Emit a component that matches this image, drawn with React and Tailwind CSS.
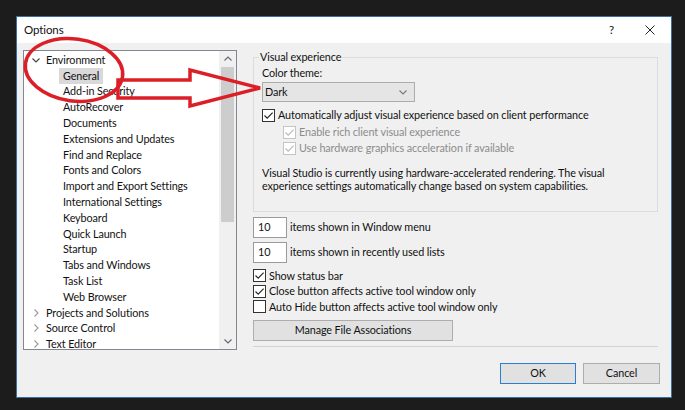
const treeItems = [
  { label: "Environment", level: 0, open: true },
  { label: "General", level: 1, selected: true },
  { label: "Add-in Security", level: 1 },
  { label: "AutoRecover", level: 1 },
  { label: "Documents", level: 1 },
  { label: "Extensions and Updates", level: 1 },
  { label: "Find and Replace", level: 1 },
  { label: "Fonts and Colors", level: 1 },
  { label: "Import and Export Settings", level: 1 },
  { label: "International Settings", level: 1 },
  { label: "Keyboard", level: 1 },
  { label: "Quick Launch", level: 1 },
  { label: "Startup", level: 1 },
  { label: "Tabs and Windows", level: 1 },
  { label: "Task List", level: 1 },
  { label: "Web Browser", level: 1 },
  { label: "Projects and Solutions", level: 0 },
  { label: "Source Control", level: 0 },
  { label: "Text Editor", level: 0 },
];

function Chevron({ dir = "down", color = "#555" }) {
  const d = dir === "down" ? "M1.5 3.5 L5 7 L8.5 3.5" : dir === "up" ? "M1.5 6.5 L5 3 L8.5 6.5" : "M3.5 1.5 L7 5 L3.5 8.5";
  return (
    <svg width="10" height="10" viewBox="0 0 10 10">
      <path d={d} fill="none" stroke={color} strokeWidth="1.1" />
    </svg>
  );
}

function Checkbox({ checked, disabled }) {
  return (
    <span
      className={`flex h-[13px] w-[13px] shrink-0 items-center justify-center border bg-white ${
        disabled ? "border-[#c4c4c4]" : "border-[#333333]"
      }`}
    >
      {checked && (
        <svg width="11" height="11" viewBox="0 0 11 11">
          <path d="M1.5 5.5 L4.2 8.2 L9.6 2.6" fill="none" stroke={disabled ? "#b8b8b8" : "#222"} strokeWidth="1.1" />
        </svg>
      )}
    </span>
  );
}

function CheckRow({ checked, disabled, children, className = "" }) {
  return (
    <div className={`flex items-center gap-[3px] ${className}`}>
      <Checkbox checked={checked} disabled={disabled} />
      <span className={disabled ? "text-[#8c8c8c]" : "text-[#111]"}>{children}</span>
    </div>
  );
}

export default function App() {
  return (
    <div
      className="relative h-[410px] w-[685px] overflow-hidden bg-[#1c1c1c] pl-[16px] pt-[16px] text-[10.8px] tracking-[-0.1px] text-[#111]"
      style={{ fontFamily: "Lato, 'Noto Sans', sans-serif" }}
    >
      <div className="flex h-[382px] w-[656px] flex-col border border-[#3a6ea5] bg-[#f0f0f0]">
        {/* title bar */}
        <div className="flex h-[26px] items-center bg-white pl-[7px]">
          <span className="text-[11.5px]">Options</span>
          <span className="ml-auto text-[11.5px]">?</span>
          <span className="ml-[31px] mr-[16px] flex h-[10px] w-[10px] items-center">
            <svg width="10" height="10" viewBox="0 0 10 10">
              <path d="M0.5 0.5 L9.5 9.5 M9.5 0.5 L0.5 9.5" stroke="#222" strokeWidth="1" />
            </svg>
          </span>
        </div>

        <div className="px-[6px] pt-[7px]">
          <div className="flex">
            {/* tree */}
            <div className="flex h-[300px] w-[214px] overflow-hidden border border-[#828790] bg-white">
              <div className="flex-1 pt-[1px]">
                {treeItems.map((it) => (
                  <div key={it.label} className="flex h-[15.8px] items-center">
                    {it.level === 0 ? (
                      <>
                        <span className="ml-[6px] flex w-[12px] justify-center">
                          <Chevron dir={it.open ? "down" : "right"} color={it.open ? "#444" : "#999"} />
                        </span>
                        <span className="ml-[4px]">{it.label}</span>
                      </>
                    ) : (
                      <span
                        className={`ml-[35px] flex h-[15.8px] items-center px-[4px] ${
                          it.selected ? "bg-[#d9d9d9]" : ""
                        }`}
                      >
                        {it.label}
                      </span>
                    )}
                  </div>
                ))}
              </div>
              <div className="flex w-[17px] flex-col bg-[#f0f0f0]">
                <div className="flex h-[16px] items-center justify-center">
                  <Chevron dir="up" color="#666" />
                </div>
                <div className="mx-[2px] h-[155px] bg-[#cdcdcd]" />
                <div className="flex-1" />
                <div className="flex h-[17px] items-center justify-center">
                  <Chevron dir="down" color="#666" />
                </div>
              </div>
            </div>

            {/* right column */}
            <div className="ml-[16px] flex w-[405px] flex-col">
              <fieldset className="border border-[#dcdcdc] px-[8px] pb-[19px]">
                <legend className="-ml-[3px] px-[1px] leading-[14px]">Visual experience</legend>
                <div className="mt-[2px] leading-[14px]">Color theme:</div>
                <div className="mt-[2px] flex h-[20px] w-[153px] items-center border border-[#acacac] bg-[#e5e5e5] pl-[2px] pr-[6px]">
                  <span>Dark</span>
                  <span className="ml-auto">
                    <Chevron dir="down" color="#777" />
                  </span>
                </div>
                <CheckRow checked className="mt-[5px] h-[16px]">
                  Automatically adjust visual experience based on client performance
                </CheckRow>
                <CheckRow checked disabled className="ml-[21px] mt-[1px] h-[16px]">
                  Enable rich client visual experience
                </CheckRow>
                <CheckRow checked disabled className="ml-[21px] h-[16px]">
                  Use hardware graphics acceleration if available
                </CheckRow>
                <p className="mt-[10px] pr-[36px] leading-[13px]">
                  Visual Studio is currently using hardware-accelerated rendering. The visual experience settings
                  automatically change based on system capabilities.
                </p>
              </fieldset>

              <div className="mt-[5px] flex items-center">
                <div className="flex h-[21px] w-[34px] items-center border border-[#9a9a9a] bg-white pl-[4px]">10</div>
                <span className="ml-[3px]">items shown in Window menu</span>
              </div>
              <div className="mt-[4px] flex items-center">
                <div className="flex h-[21px] w-[34px] items-center border border-[#9a9a9a] bg-white pl-[4px]">10</div>
                <span className="ml-[3px]">items shown in recently used lists</span>
              </div>

              <CheckRow checked className="mt-[5px] h-[15.5px]">
                Show status bar
              </CheckRow>
              <CheckRow checked className="h-[15.5px]">
                Close button affects active tool window only
              </CheckRow>
              <CheckRow className="h-[15.5px]">Auto Hide button affects active tool window only</CheckRow>

              <button className="mt-[5px] flex h-[21px] w-[200px] items-center justify-center border border-[#adadad] bg-[#e1e1e1]">
                Manage File Associations
              </button>
              <div className="mt-[5px] h-px bg-[#d2d2d2]" />
            </div>
          </div>

          <div className="mt-[13px] flex justify-end gap-[7px] pr-[5px]">
            <button className="flex h-[21px] w-[76px] items-center justify-center border border-[#2a7fd4] bg-[#e1e1e1]">
              OK
            </button>
            <button className="flex h-[21px] w-[77px] items-center justify-center border border-[#adadad] bg-[#e1e1e1]">
              Cancel
            </button>
          </div>
        </div>
      </div>

      {/* red annotation drawn on top of the screenshot */}
      <svg className="pointer-events-none absolute left-0 top-0" width="685" height="410" viewBox="0 0 685 410">
        <ellipse
          cx="74"
          cy="70"
          rx="49"
          ry="31"
          transform="rotate(8 74 70)"
          fill="none"
          stroke="#dc1f27"
          strokeWidth="3.5"
        />
        <path
          d="M118 80 L190 80 L190 70 L260 88 L190 106 L190 98 L118 98 Z"
          fill="none"
          stroke="#dc1f27"
          strokeWidth="3.5"
          strokeLinejoin="miter"
        />
      </svg>
    </div>
  );
}
